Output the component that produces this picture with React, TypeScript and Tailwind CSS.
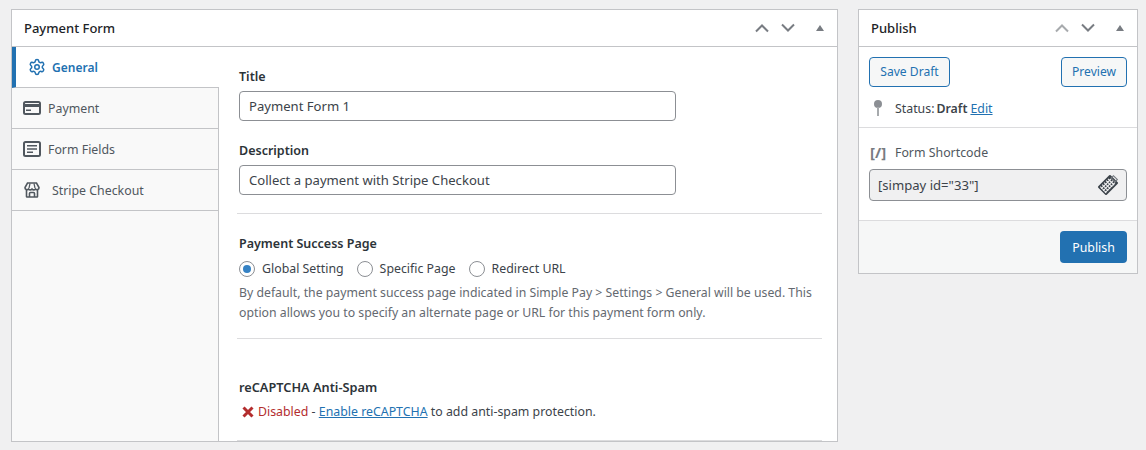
import { Settings } from 'lucide-react';

function Chevrons({ upMuted }: { upMuted?: boolean }) {
  return (
    <div className="flex items-center">
      <svg width="16" height="10" viewBox="0 0 16 10" fill="none" className="mr-[10px]">
        <path d="M2 8.5 8 2.5l6 6" stroke={upMuted ? '#a7aaad' : '#787c82'} strokeWidth="2" />
      </svg>
      <svg width="16" height="10" viewBox="0 0 16 10" fill="none" className="mr-[19px]">
        <path d="M2 1.5 8 7.5l6-6" stroke="#787c82" strokeWidth="2" />
      </svg>
      <svg width="10" height="6" viewBox="0 0 10 6">
        <path d="M5 0l4 6H1z" fill="#787c82" />
      </svg>
    </div>
  );
}

function CardIcon() {
  return (
    <svg width="18" height="14" viewBox="0 0 18 14" className="shrink-0">
      <rect x="1" y="1" width="16" height="12" rx="1.5" fill="none" stroke="#50575e" strokeWidth="2" />
      <rect x="1" y="3" width="16" height="3" fill="#50575e" />
      <rect x="3" y="8.5" width="5" height="1.5" fill="#50575e" />
    </svg>
  );
}

function FieldsIcon() {
  return (
    <svg width="18" height="16" viewBox="0 0 18 16" className="shrink-0">
      <rect x="1" y="1" width="16" height="14" rx="1.5" fill="none" stroke="#50575e" strokeWidth="2" />
      <path d="M4 4.75h10M4 8h10M4 11.25h6" stroke="#50575e" strokeWidth="1.5" />
    </svg>
  );
}

function StoreIcon() {
  return (
    <svg width="16" height="16" viewBox="0 0 16 16" fill="none" stroke="#50575e" className="shrink-0">
      <path d="M2.5 8v6.5a.5.5 0 0 0 .5.5h10a.5.5 0 0 0 .5-.5V8" strokeWidth="1.6" />
      <path d="M3.5 1h9l2.5 4.5a2 2 0 0 1-3.5 1.5 2.2 2.2 0 0 1-3.5 0 2.2 2.2 0 0 1-3.5 0A2 2 0 0 1 1 5.5z" strokeWidth="1.6" />
      <path d="M5.5 15v-3.5a1 1 0 0 1 1-1h3a1 1 0 0 1 1 1V15" strokeWidth="1.6" />
      <path d="M6 1.5 5 6M10 1.5 11 6" strokeWidth="1.2" />
    </svg>
  );
}

function Radio({ label, checked }: { label: string; checked?: boolean }) {
  return (
    <label className="flex items-center">
      <span className="w-4 h-4 rounded-full border border-[#8c8f94] bg-white flex items-center justify-center mr-[7px]">
        {checked && <span className="w-2 h-2 rounded-full bg-[#3582c4]" />}
      </span>
      <span>{label}</span>
    </label>
  );
}

function TabRow({ children }: { children: React.ReactNode }) {
  return (
    <div className="h-[41px] border-b border-[#c3c4c7] flex items-center text-[#50575e] pl-[11px]">{children}</div>
  );
}

function ClipIcon() {
  return (
    <svg width="22" height="22" viewBox="0 0 20 20" className="-mr-[1px]">
      <g transform="rotate(45 10 10)">
        <rect x="4.5" y="2" width="11" height="16" rx="1" fill="#3c434a" />
        <path d="M6 6h8M6 8.5h8M6 11h8M6 13.5h8M6 16h8M8 4v13M10.5 4v13M13 4v13" stroke="#f0f0f1" strokeWidth="1" />
        <rect x="7.5" y="0.5" width="5" height="3" fill="none" stroke="#787c82" strokeWidth="1" />
      </g>
    </svg>
  );
}

export default function App() {
  return (
    <div
      className="h-[450px] w-[1146px] overflow-hidden bg-[#f0f0f1] flex items-start pl-[11px] pt-[9px] gap-[20px] text-[12.35px] text-[#3c434a]"
      style={{ fontFamily: '"Noto Sans", "Open Sans", sans-serif' }}
    >
      <div className="w-[827px] h-[433px] bg-white border border-[#c3c4c7] flex flex-col shrink-0">
        <div className="h-[37px] border-b border-[#c3c4c7] flex items-center justify-between pl-[12px] pr-[12px] shrink-0">
          <h2 className="text-[13px] font-medium text-[#1d2327] pt-[2px]">Payment Form</h2>
          <Chevrons />
        </div>
        <div className="flex flex-1 min-h-0">
          <div className="w-[207px] shrink-0 bg-[#f9f9f9] border-r border-[#c3c4c7]">
            <div className="h-[41px] -mr-px relative bg-white border-l-4 border-[#2271b1] border-b border-b-[#c3c4c7] flex items-center pl-[12px] text-[#2271b1] font-semibold text-[12px]">
              <Settings size={18} strokeWidth={2} className="mr-[6px]" />
              <span className="pt-[1px]">General</span>
            </div>
            <TabRow>
              <CardIcon />
              <span className="ml-[7px] pt-[3px]">Payment</span>
            </TabRow>
            <TabRow>
              <FieldsIcon />
              <span className="ml-[7px] pt-[3px]">Form Fields</span>
            </TabRow>
            <TabRow>
              <span className="ml-[1px]">
                <StoreIcon />
              </span>
              <span className="ml-[12px] pt-[3px]">Stripe Checkout</span>
            </TabRow>
          </div>
          <div className="flex-1 pl-[18px] pr-[15px] flex flex-col">
            <label className="shrink-0 mt-[21px] pl-[2px] leading-[18px] font-semibold text-[12.5px] text-[#2c3338]">Title</label>
            <div className="shrink-0 mt-[5px] ml-[2px] w-[437px] h-[30px] border border-[#8c8f94] rounded bg-white flex items-center pl-[9px] text-[13.1px] pt-[1px]">
              Payment Form 1
            </div>
            <label className="shrink-0 mt-[21px] pl-[2px] leading-[18px] font-semibold text-[12.5px] text-[#2c3338]">Description</label>
            <div className="shrink-0 mt-[5px] ml-[2px] w-[437px] h-[30px] border border-[#8c8f94] rounded bg-white flex items-center pl-[9px] text-[13.1px] pt-[1px]">
              Collect a payment with Stripe Checkout
            </div>
            <div className="shrink-0 mt-[18px] border-t border-[#dcdcde]" />
            <div className="shrink-0 mt-[21px] pl-[2px] leading-[18px] font-semibold text-[12.5px] text-[#2c3338]">Payment Success Page</div>
            <div className="shrink-0 mt-[6px] pl-[2px] flex items-center gap-[13px] h-[20px]">
              <Radio label="Global Setting" checked />
              <Radio label="Specific Page" />
              <Radio label="Redirect URL" />
            </div>
            <p className="shrink-0 mt-[4px] pl-[2px] leading-[20px] text-[12.28px] text-[#646970] whitespace-nowrap">
              By default, the payment success page indicated in Simple Pay &gt; Settings &gt; General will be used. This
              <br />
              option allows you to specify an alternate page or URL for this payment form only.
            </p>
            <div className="shrink-0 mt-[15px] border-t border-[#dcdcde]" />
            <div className="shrink-0 mt-[39px] pl-[2px] leading-[18px] font-semibold text-[12.75px] text-[#2c3338]">reCAPTCHA Anti-Spam</div>
            <div className="shrink-0 mt-[6px] pl-[5px] flex items-center leading-[20px]">
              <svg width="12" height="12" viewBox="0 0 12 12" className="mr-[4px]">
                <path d="M1.5 1.5l9 9M10.5 1.5l-9 9" stroke="#b32d2e" strokeWidth="3" />
              </svg>
              <span className="text-[#b32d2e]">Disabled</span>
              <span className="whitespace-pre"> - </span>
              <a className="text-[#2271b1] underline">Enable reCAPTCHA</a>
              <span className="whitespace-pre"> to add anti-spam protection.</span>
            </div>
            <div className="shrink-0 mt-[18px] border-t border-[#dcdcde]" />
          </div>
        </div>
      </div>

      <div className="w-[280px] h-[265px] bg-white border border-[#c3c4c7] flex flex-col shrink-0">
        <div className="h-[37px] border-b border-[#c3c4c7] flex items-center justify-between pl-[12px] pr-[12px] shrink-0">
          <h2 className="text-[13px] font-medium text-[#1d2327] pt-[2px]">Publish</h2>
          <Chevrons upMuted />
        </div>
        <div className="h-[81px] border-b border-[#dcdcde] px-[10px] pt-[10px] shrink-0">
          <div className="flex justify-between">
            <button className="h-[30px] w-[81px] border border-[#2271b1] rounded bg-[#f6f7f7] text-[#2271b1] text-[12.1px]">
              Save Draft
            </button>
            <button className="h-[30px] w-[66px] border border-[#2271b1] rounded bg-[#f6f7f7] text-[#2271b1] text-[12.1px]">
              Preview
            </button>
          </div>
          <div className="mt-[10px] flex items-center h-[22px]">
            <svg width="10" height="18" viewBox="0 0 10 18" className="ml-[4px] mr-[12px]">
              <circle cx="5" cy="5" r="4" fill="#8c8f94" />
              <rect x="4" y="8" width="2" height="9" fill="#a7aaad" />
            </svg>
            <span className="pt-[3px]">Status:</span>
            <span className="ml-[2px] font-semibold pt-[3px]">Draft</span>
            <a className="ml-[3px] text-[#2271b1] underline pt-[3px]">Edit</a>
          </div>
        </div>
        <div className="h-[93px] px-[10px] pt-[15px] border-b border-[#dcdcde] shrink-0">
          <div className="flex items-center h-[18px]">
            <span className="w-[19px] mr-[6px] ml-[1px] font-bold text-[#787c82] text-[15px] leading-none whitespace-nowrap">[/]</span>
            <span className="text-[#50575e] pt-[3px]">Form Shortcode</span>
          </div>
          <div className="mt-[8px] h-[32px] border border-[#8c8f94] rounded bg-[#f0f0f1] flex items-center justify-between pl-[8px] pr-[8px]">
            <span className="text-[13.1px] pt-[1px]">[simpay id="33"]</span>
            <ClipIcon />
          </div>
        </div>
        <div className="flex-1 bg-[#f6f7f7] flex justify-end items-start px-[10px] pt-[10px]">
          <button className="h-[32px] w-[67px] rounded bg-[#2271b1] text-white pt-[2px]">Publish</button>
        </div>
      </div>
    </div>
  );
}
